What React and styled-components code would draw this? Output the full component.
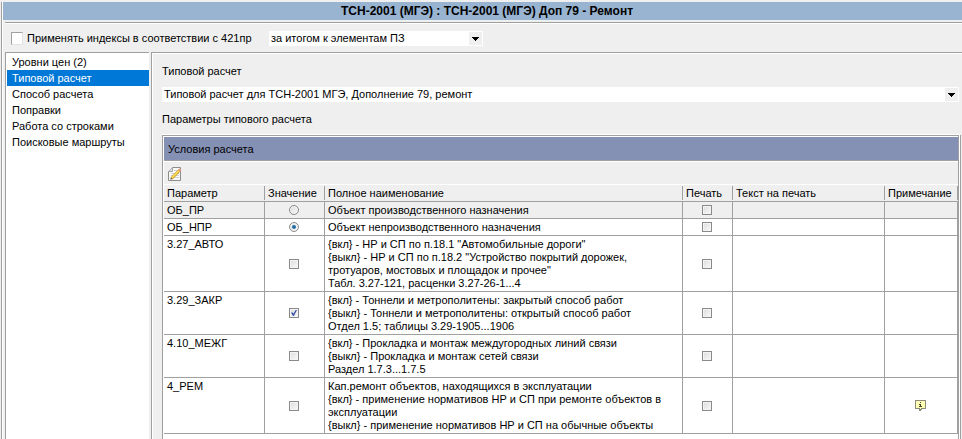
import React, { useState } from "react";
import styled, { createGlobalStyle } from "styled-components";

const sections = [
    "Уровни цен (2)",
    "Типовой расчет",
    "Способ расчета",
    "Поправки",
    "Работа со строками",
    "Поисковые маршруты",
];

const params = [
    { id: "ОБ_ПР", kind: "radio", lines: ["Объект производственного назначения"] },
    { id: "ОБ_НПР", kind: "radio", on: true, lines: ["Объект непроизводственного назначения"] },
    {
        id: "3.27_АВТО",
        kind: "checkbox",
        lines: [
            '{вкл} - НР и СП по п.18.1 "Автомобильные дороги"',
            '{выкл} - НР и СП по п.18.2 "Устройство покрытий дорожек, тротуаров, мостовых и площадок и прочее"',
            "Табл. 3.27-121, расценки 3.27-26-1...4",
        ],
    },
    {
        id: "3.29_ЗАКР",
        kind: "checkbox",
        on: true,
        lines: [
            "{вкл} - Тоннели и метрополитены: закрытый способ работ",
            "{выкл} - Тоннели и метрополитены: открытый способ работ",
            "Отдел 1.5; таблицы 3.29-1905...1906",
        ],
    },
    {
        id: "4.10_МЕЖГ",
        kind: "checkbox",
        lines: [
            "{вкл} - Прокладка и монтаж междугородных линий связи",
            "{выкл} - Прокладка и монтаж сетей связи",
            "Раздел 1.7.3...1.7.5",
        ],
    },
    {
        id: "4_РЕМ",
        kind: "checkbox",
        note: true,
        lines: [
            "Кап.ремонт объектов, находящихся в эксплуатации",
            "{вкл} - применение нормативов НР и СП при ремонте объектов в эксплуатации",
            "{выкл} - применение нормативов НР и СП на обычные объекты",
        ],
    },
];

export default function App() {
    const [section, setSection] = useState(1);

    return (
        <Window>
            <GlobalStyle />
            <Title>ТСН-2001 (МГЭ) : ТСН-2001 (МГЭ) Доп 79 - Ремонт</Title>
            <Content>
                <OptionsBar>
                    <OptionLabel>
                        <PlainCheck type="checkbox" />
                        Применять индексы в соответствии с 421пр
                    </OptionLabel>
                    <Combo label="Способ применения" width="214px" value="за итогом к элементам ПЗ" />
                </OptionsBar>
                <Columns>
                    <Sidebar>
                        {sections.map((name, i) => (
                            <SidebarItem key={name} type="button" $active={i === section} onClick={() => setSection(i)}>
                                {name}
                            </SidebarItem>
                        ))}
                    </Sidebar>
                    <Panel>
                        <FieldLabel htmlFor="calc">Типовой расчет</FieldLabel>
                        <Combo id="calc" width="100%" value="Типовой расчет для ТСН-2001 МГЭ, Дополнение 79, ремонт" />
                        <Caption>Параметры типового расчета</Caption>
                        <Group>
                            <GroupTitle>Условия расчета</GroupTitle>
                            <GroupTools>
                                <ToolButton type="button" aria-label="Изменить">
                                    <EditIcon />
                                </ToolButton>
                            </GroupTools>
                            <ParamTable />
                        </Group>
                    </Panel>
                </Columns>
            </Content>
        </Window>
    );
}

function Combo({ id, label, width, value }) {
    return (
        <ComboBox $width={width}>
            <ComboSelect id={id} aria-label={label}>
                <option>{value}</option>
            </ComboSelect>
            <ComboArrow>
                <svg width="7" height="4" viewBox="0 0 7 4" shapeRendering="crispEdges">
                    <path d="M0 0h7v1H6v1H5v1H4v1H3V3H2V2H1V1H0z" />
                </svg>
            </ComboArrow>
        </ComboBox>
    );
}

function ParamTable() {
    return (
        <Table>
            <colgroup>
                <col style={{ width: 101 }} />
                <col style={{ width: 60 }} />
                <col />
                <col style={{ width: 50 }} />
                <col style={{ width: 152 }} />
                <col style={{ width: 73 }} />
            </colgroup>
            <thead>
                <tr>
                    <HeadCell>Параметр</HeadCell>
                    <HeadCell>Значение</HeadCell>
                    <HeadCell>Полное наименование</HeadCell>
                    <HeadCell>Печать</HeadCell>
                    <HeadCell>Текст на печать</HeadCell>
                    <HeadCell>Примечание</HeadCell>
                </tr>
            </thead>
            <tbody>
                {params.map((p, i) => (
                    <Row key={p.id} $current={i === 0}>
                        <Cell>{p.id}</Cell>
                        <MarkCell>
                            <Mark
                                type={p.kind}
                                name={p.kind === "radio" ? "object" : p.id}
                                aria-label={p.id}
                                defaultChecked={p.on}
                            />
                        </MarkCell>
                        <Cell>
                            {p.lines.map((line) => (
                                <div key={line}>{line}</div>
                            ))}
                        </Cell>
                        <MarkCell>
                            <Mark type="checkbox" aria-label={"Печать " + p.id} />
                        </MarkCell>
                        <Cell />
                        <MarkCell>{p.note && <NoteIcon />}</MarkCell>
                    </Row>
                ))}
            </tbody>
        </Table>
    );
}

function EditIcon() {
    return (
        <svg width="14" height="15" viewBox="0 0 14 15">
            <path d="M4.5 1.5h8v13H.5v-9z" fill="#f8f8f8" stroke="#8c8c8c" />
            <path d="M4.5 1.5v4h-4" fill="#dedede" stroke="#a4a4a4" />
            <path d="M6 4.5h5M3 7.5h8M3 9.5h8M3 11.5h8" stroke="#cdd1d6" />
            <path d="M3.5 12.5L11.8 4" stroke="#d09a28" strokeWidth="2.8" />
            <path d="M3.8 12L11.6 4" stroke="#fbe25a" strokeWidth="1.6" />
            <path d="M11 4.8l1.6-1.6" stroke="#e59a80" strokeWidth="2.4" />
            <path d="M2.2 13.6l.8-2 1.4 1.4z" fill="#4a4030" />
        </svg>
    );
}

function NoteIcon() {
    return (
        <svg width="11" height="11" viewBox="0 0 11 11" shapeRendering="crispEdges">
            <path d="M0 0h11v9H7v1H6v1H4V9H0z" fill="#8c8c7c" />
            <path d="M1 1h9v7H6v1H5V8H1z" fill="#ffffb4" />
            <path d="M5 2h1v1H5zM4 4h2v2h1v1H4V6h1V5H4z" fill="#44442c" />
        </svg>
    );
}

const GlobalStyle = createGlobalStyle`
  * {
    box-sizing: border-box;
  }
  body {
    margin: 0;
    background: #efefef;
    color: #000;
    font: 11px/13px "Liberation Sans", Arial, sans-serif;
  }
  button, select, input {
    margin: 0;
    font: inherit;
    color: inherit;
  }
`;
const Window = styled.div`
  display: flex;
  flex-direction: column;
  min-height: 100vh;
  padding: 2px 0 0 1px;
`;
const Title = styled.h1`
  height: 18px;
  margin: 0;
  padding-left: 10px;
  border-left: 1px solid #a0a0a0;
  box-shadow: inset 1px 0 #fff;
  background: #99b4d1;
  font-size: 12px;
  line-height: 18px;
  text-align: center;
`;
const Content = styled.div`
  flex: 1;
  display: flex;
  flex-direction: column;
  padding: 2px 0 0 3px;
  border-left: 1px solid #a0a0a0;
  box-shadow: inset 1px 0 #fff;
`;
const OptionsBar = styled.div`
  display: flex;
  align-items: center;
  gap: 12px;
  height: 30px;
  padding: 2px 0 0 6px;
  border-top: 1px solid #a0a0a0;
  box-shadow: inset 0 1px #fff;
`;
const OptionLabel = styled.label`
  display: flex;
  align-items: center;
  gap: 4px;
  width: 246px;
  white-space: nowrap;
`;
const PlainCheck = styled.input`
  appearance: none;
  width: 12px;
  height: 13px;
  border: 1px solid;
  border-color: #a0a0a0 #e3e3e3 #e3e3e3 #a0a0a0;
  background: #fff;
  &:checked {
    box-shadow: inset 0 0 0 2px #fff;
    background: #000;
  }
`;
const ComboBox = styled.div`
  position: relative;
  width: ${(props) => props.$width};
  height: 15px;
`;
const ComboSelect = styled.select`
  appearance: none;
  display: block;
  width: 100%;
  height: 15px;
  padding: 0 16px 0 2px;
  border: 0;
  border-radius: 0;
  background: #fff;
`;
const ComboArrow = styled.span`
  position: absolute;
  top: 1px;
  right: 1px;
  display: flex;
  align-items: center;
  justify-content: center;
  width: 13px;
  height: 13px;
  background: #efefef;
  pointer-events: none;
`;
const Columns = styled.div`
  flex: 1;
  display: flex;
  gap: 2px;
`;
const Sidebar = styled.nav`
  width: 144px;
  padding: 1px 0 0 1px;
  border: 1px solid #a0a0a0;
  border-width: 1px 0 0 1px;
  background: #fff;
`;
const SidebarItem = styled.button`
  display: block;
  width: 100%;
  height: 16px;
  padding: 0 5px;
  border: 0;
  background: ${(props) => (props.$active ? "#0078d7" : "#fff")};
  color: ${(props) => (props.$active ? "#fff" : "#000")};
  text-align: left;
  white-space: nowrap;
`;
const Panel = styled.main`
  flex: 1;
  min-width: 0;
  display: flex;
  flex-direction: column;
  padding: 12px 3px 0 10px;
  border: 1px solid #a0a0a0;
  border-width: 1px 0 0 1px;
  box-shadow: inset 1px 1px #fff;
`;
const FieldLabel = styled.label`
  margin-bottom: 9px;
`;
const Caption = styled.div`
  margin: 11px 0 9px;
`;
const Group = styled.section`
  flex: 1;
  padding: 1px 0 0 1px;
  border: 1px solid #a0a0a0;
  border-bottom: 0;
  background: #fff;
  box-shadow: 0 -1px #fff, 1px 0 #fff, 2px 0 #a0a0a0;
`;
const GroupTitle = styled.h2`
  height: 24px;
  margin: 0;
  padding: 6px 4px 4px;
  border-bottom: 1px solid #a0a0a0;
  background: #8490b4;
  font-size: 11px;
  font-weight: normal;
`;
const GroupTools = styled.div`
  display: flex;
  align-items: center;
  height: 24px;
  padding: 0 4px;
  border: 1px solid #fff;
  border-width: 1px 0;
  background: #efefef;
`;
const ToolButton = styled.button`
  display: flex;
  padding: 0;
  border: 0;
  background: none;
`;
const Table = styled.table`
  width: 100%;
  table-layout: fixed;
  border-collapse: separate;
  border-spacing: 0;
`;
const HeadCell = styled.th`
  height: 17px;
  padding: 0 3px;
  border-bottom: 1px solid #a0a0a0;
  background: linear-gradient(#a0a0a0, #a0a0a0) right / 1px 14px no-repeat #efefef;
  font-weight: normal;
  text-align: left;
  white-space: nowrap;
`;
const Row = styled.tr`
  background: ${(props) => (props.$current ? "#efefef" : "#fff")};
`;
const Cell = styled.td`
  padding: 2px 0 1px 3px;
  border: 1px solid #a0a0a0;
  border-width: 0 1px 1px 0;
  vertical-align: top;
`;
const MarkCell = styled(Cell)`
  padding: 0 1px 0 0;
  line-height: 0;
  text-align: center;
  vertical-align: middle;
`;
const Mark = styled.input`
  appearance: none;
  position: relative;
  width: 10px;
  height: 10px;
  border: 1px solid #8a8a8a;
  border-radius: ${(props) => (props.type === "radio" ? "50%" : "0")};
  background: linear-gradient(135deg, #dcdcdc, #fafafa);
  box-shadow: inset 0 0 0 1px #f4f4f4;
  vertical-align: middle;
  &:checked::after {
    content: "";
    position: absolute;
    inset: ${(props) => (props.type === "radio" ? "2px" : "1px")};
    border-radius: ${(props) => (props.type === "radio" ? "50%" : "0")};
    background: ${(props) => (props.type === "radio" ? "radial-gradient(#1a5c94, #2f86bd)" : "#3850a8")};
    clip-path: ${(props) =>
        props.type === "radio" ? "none" : "polygon(0 45%, 22% 38%, 40% 62%, 78% 0, 100% 0, 48% 100%, 35% 100%)"};
  }
`;
